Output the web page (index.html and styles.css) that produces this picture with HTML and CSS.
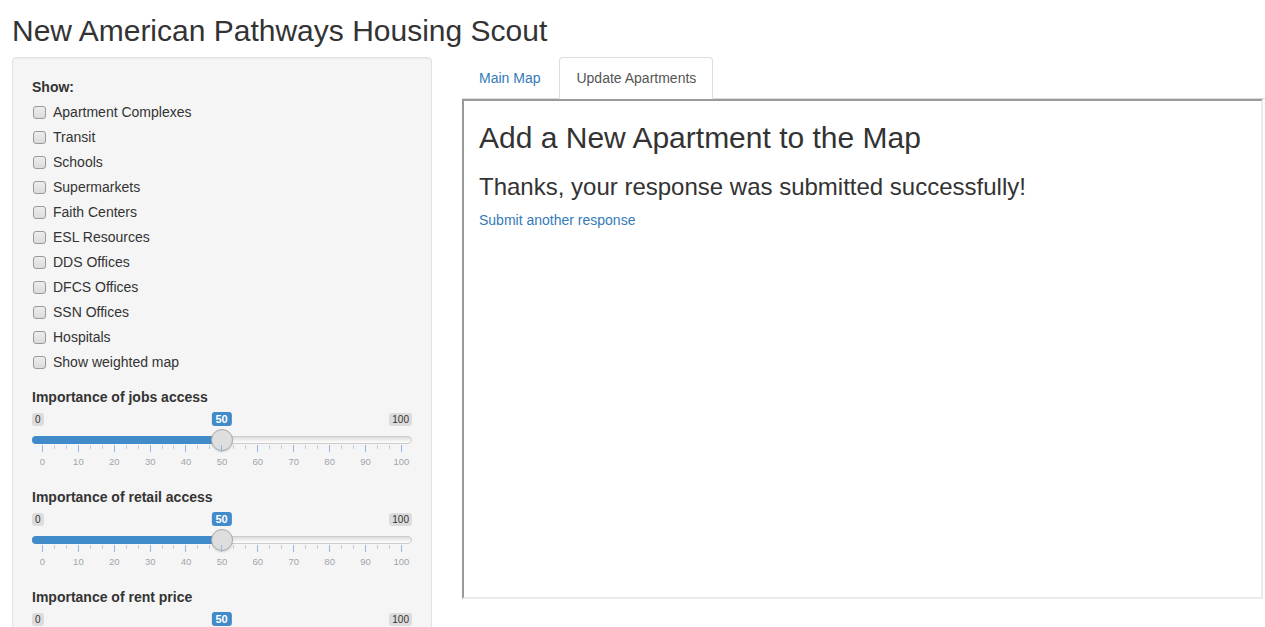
FILE: index.html
```html
<!DOCTYPE html>
<html>
<head>
<meta charset="utf-8">
<title>New American Pathways Housing Scout</title>
<link rel="stylesheet" href="styles.css">
</head>
<body>
<div class="page">
  <h2 class="title">New American Pathways Housing Scout</h2>
  <div class="layout">
    <div class="well">
      <div class="form-group">
        <label class="control-label">Show:</label>
        <div class="options">
          <label class="checkbox"><input type="checkbox"><span>Apartment Complexes</span></label>
          <label class="checkbox"><input type="checkbox"><span>Transit</span></label>
          <label class="checkbox"><input type="checkbox"><span>Schools</span></label>
          <label class="checkbox"><input type="checkbox"><span>Supermarkets</span></label>
          <label class="checkbox"><input type="checkbox"><span>Faith Centers</span></label>
          <label class="checkbox"><input type="checkbox"><span>ESL Resources</span></label>
          <label class="checkbox"><input type="checkbox"><span>DDS Offices</span></label>
          <label class="checkbox"><input type="checkbox"><span>DFCS Offices</span></label>
          <label class="checkbox"><input type="checkbox"><span>SSN Offices</span></label>
          <label class="checkbox"><input type="checkbox"><span>Hospitals</span></label>
          <label class="checkbox"><input type="checkbox"><span>Show weighted map</span></label>
        </div>
      </div>

      <div class="form-group">
        <label class="control-label">Importance of jobs access</label>
        <div class="irs">
          <span class="irs-line"></span>
          <span class="irs-bar" style="width:189.5px"></span>
          <span class="irs-min">0</span>
          <span class="irs-max">100</span>
          <span class="irs-single" style="left:189.5px">50</span>
          <span class="irs-handle" style="left:178.5px"></span>
          <div class="irs-grid">
            <i class="pol major"></i><i class="pol"></i><i class="pol"></i><i class="pol major"></i><i class="pol"></i><i class="pol"></i><i class="pol major"></i><i class="pol"></i><i class="pol"></i><i class="pol major"></i><i class="pol"></i><i class="pol"></i><i class="pol major"></i><i class="pol"></i><i class="pol"></i><i class="pol major"></i><i class="pol"></i><i class="pol"></i><i class="pol major"></i><i class="pol"></i><i class="pol"></i><i class="pol major"></i><i class="pol"></i><i class="pol"></i><i class="pol major"></i><i class="pol"></i><i class="pol"></i><i class="pol major"></i><i class="pol"></i><i class="pol"></i><i class="pol major"></i>
          </div>
          <div class="irs-grid-text">
            <span>0</span><span>10</span><span>20</span><span>30</span><span>40</span><span>50</span><span>60</span><span>70</span><span>80</span><span>90</span><span>100</span>
          </div>
        </div>
      </div>

      <div class="form-group">
        <label class="control-label">Importance of retail access</label>
        <div class="irs">
          <span class="irs-line"></span>
          <span class="irs-bar" style="width:189.5px"></span>
          <span class="irs-min">0</span>
          <span class="irs-max">100</span>
          <span class="irs-single" style="left:189.5px">50</span>
          <span class="irs-handle" style="left:178.5px"></span>
          <div class="irs-grid">
            <i class="pol major"></i><i class="pol"></i><i class="pol"></i><i class="pol major"></i><i class="pol"></i><i class="pol"></i><i class="pol major"></i><i class="pol"></i><i class="pol"></i><i class="pol major"></i><i class="pol"></i><i class="pol"></i><i class="pol major"></i><i class="pol"></i><i class="pol"></i><i class="pol major"></i><i class="pol"></i><i class="pol"></i><i class="pol major"></i><i class="pol"></i><i class="pol"></i><i class="pol major"></i><i class="pol"></i><i class="pol"></i><i class="pol major"></i><i class="pol"></i><i class="pol"></i><i class="pol major"></i><i class="pol"></i><i class="pol"></i><i class="pol major"></i>
          </div>
          <div class="irs-grid-text">
            <span>0</span><span>10</span><span>20</span><span>30</span><span>40</span><span>50</span><span>60</span><span>70</span><span>80</span><span>90</span><span>100</span>
          </div>
        </div>
      </div>

      <div class="form-group">
        <label class="control-label">Importance of rent price</label>
        <div class="irs">
          <span class="irs-line"></span>
          <span class="irs-bar" style="width:189.5px"></span>
          <span class="irs-min">0</span>
          <span class="irs-max">100</span>
          <span class="irs-single" style="left:189.5px">50</span>
          <span class="irs-handle" style="left:178.5px"></span>
        </div>
      </div>
    </div>

    <div class="main">
      <ul class="nav-tabs">
        <li class="tab"><a href="#">Main Map</a></li>
        <li class="tab active"><a href="#">Update Apartments</a></li>
      </ul>
      <div class="frame">
        <h2 class="form-title">Add a New Apartment to the Map</h2>
        <h3 class="thanks">Thanks, your response was submitted successfully!</h3>
        <div class="again"><a href="#">Submit another response</a></div>
      </div>
    </div>
  </div>
</div>
</body>
</html>
```

FILE: styles.css
```css
html, body {
  margin: 0;
  padding: 0;
  overflow: hidden;
  background: #fff;
}
body {
  font-family: "Liberation Sans", Arial, Helvetica, sans-serif;
  font-size: 14px;
  line-height: 20px;
  color: #333;
}
a {
  color: #337ab7;
  text-decoration: none;
}
.page {
  padding: 0 0 0 12px;
}
.title {
  font-size: 30px;
  font-weight: 500;
  line-height: 33px;
  margin: 14px 0 10px;
}
.layout {
  display: flex;
  gap: 30px;
  align-items: flex-start;
}
.well {
  box-sizing: border-box;
  width: 420px;
  flex: none;
  padding: 19px;
  background: #f5f5f5;
  border: 1px solid #e3e3e3;
  border-radius: 4px;
  box-shadow: inset 0 1px 1px rgba(0,0,0,.05);
}
.form-group {
  margin-bottom: 15px;
}
.control-label {
  display: block;
  font-weight: bold;
  margin-bottom: 5px;
}
.options {
  display: flex;
  flex-direction: column;
  gap: 5px;
}
.checkbox {
  display: flex;
  align-items: flex-start;
  height: 20px;
}
.checkbox input {
  -webkit-appearance: none;
  appearance: none;
  box-sizing: border-box;
  width: 13px;
  height: 13px;
  margin: 4px 7px 0 1px;
  border: 1px solid #9a9a9a;
  border-radius: 3px;
  background: linear-gradient(#ededed, #dcdcdc);
  flex: none;
}

/* slider */
.irs {
  position: relative;
  height: 60px;
}
.irs-line {
  position: absolute;
  left: 0;
  right: 0;
  top: 24px;
  height: 8px;
  box-sizing: border-box;
  border: 1px solid #cccccc;
  border-radius: 8px;
  background: linear-gradient(#dddddd, #ffffff);
}
.irs-bar {
  position: absolute;
  left: 0;
  top: 24px;
  height: 8px;
  background: #428bca;
  border-radius: 8px 0 0 8px;
}
.irs-min, .irs-max {
  position: absolute;
  top: 1px;
  padding: 0 3px;
  font-size: 10px;
  line-height: 13px;
  background: rgba(0,0,0,.1);
  border-radius: 3px;
  color: #333;
}
.irs-min { left: 0; }
.irs-max { right: 0; }
.irs-single {
  position: absolute;
  top: 0;
  transform: translateX(-50%);
  padding: 0 4px;
  font-size: 11px;
  line-height: 14px;
  background: #428bca;
  color: #fff;
  border-radius: 3px;
  font-weight: bold;
}
.irs-handle {
  position: absolute;
  top: 17px;
  width: 22px;
  height: 22px;
  box-sizing: border-box;
  border: 1px solid #ababab;
  border-radius: 50%;
  background: #dedede;
  box-shadow: 0 1px 2px rgba(0,0,0,.15);
}
.irs-grid {
  position: absolute;
  left: 10px;
  top: 33px;
  width: 360px;
  display: flex;
  justify-content: space-between;
  align-items: flex-start;
}
.pol {
  display: block;
  width: 1px;
  height: 4px;
  background: #c3ccd6;
}
.pol.major {
  height: 7px;
  background: #93b8df;
}
.irs-grid-text {
  position: absolute;
  left: 10px;
  top: 44px;
  width: 360px;
  display: flex;
  justify-content: space-between;
}
.irs-grid-text span {
  width: 1px;
  display: flex;
  justify-content: center;
  white-space: nowrap;
  font-size: 9.5px;
  line-height: 12px;
  color: #9fa6ad;
}

/* main */
.main {
  flex: 1;
  min-width: 0;
}
.nav-tabs {
  list-style: none;
  margin: 0;
  padding: 0;
  display: flex;
  border-bottom: 1px solid #ddd;
}
.tab {
  margin-bottom: -1px;
}
.tab a {
  display: block;
  padding: 10px 16px;
  margin-right: 2px;
  border: 1px solid transparent;
  border-radius: 4px 4px 0 0;
  line-height: 20px;
}
.tab.active a {
  color: #555;
  background: #fff;
  border-color: #ddd;
  border-bottom-color: transparent;
}
.frame {
  box-sizing: border-box;
  width: 801px;
  height: 500px;
  border-style: solid;
  border-width: 2px;
  border-color: #9a9a9a #ebebeb #ebebeb #9a9a9a;
  padding: 20px 15px 0;
  overflow: hidden;
}
.form-title {
  font-size: 30px;
  font-weight: 500;
  line-height: 33px;
  margin: 0 0 20px;
}
.thanks {
  font-size: 24px;
  font-weight: 500;
  line-height: 26px;
  margin: 0 0 10px;
}
```
